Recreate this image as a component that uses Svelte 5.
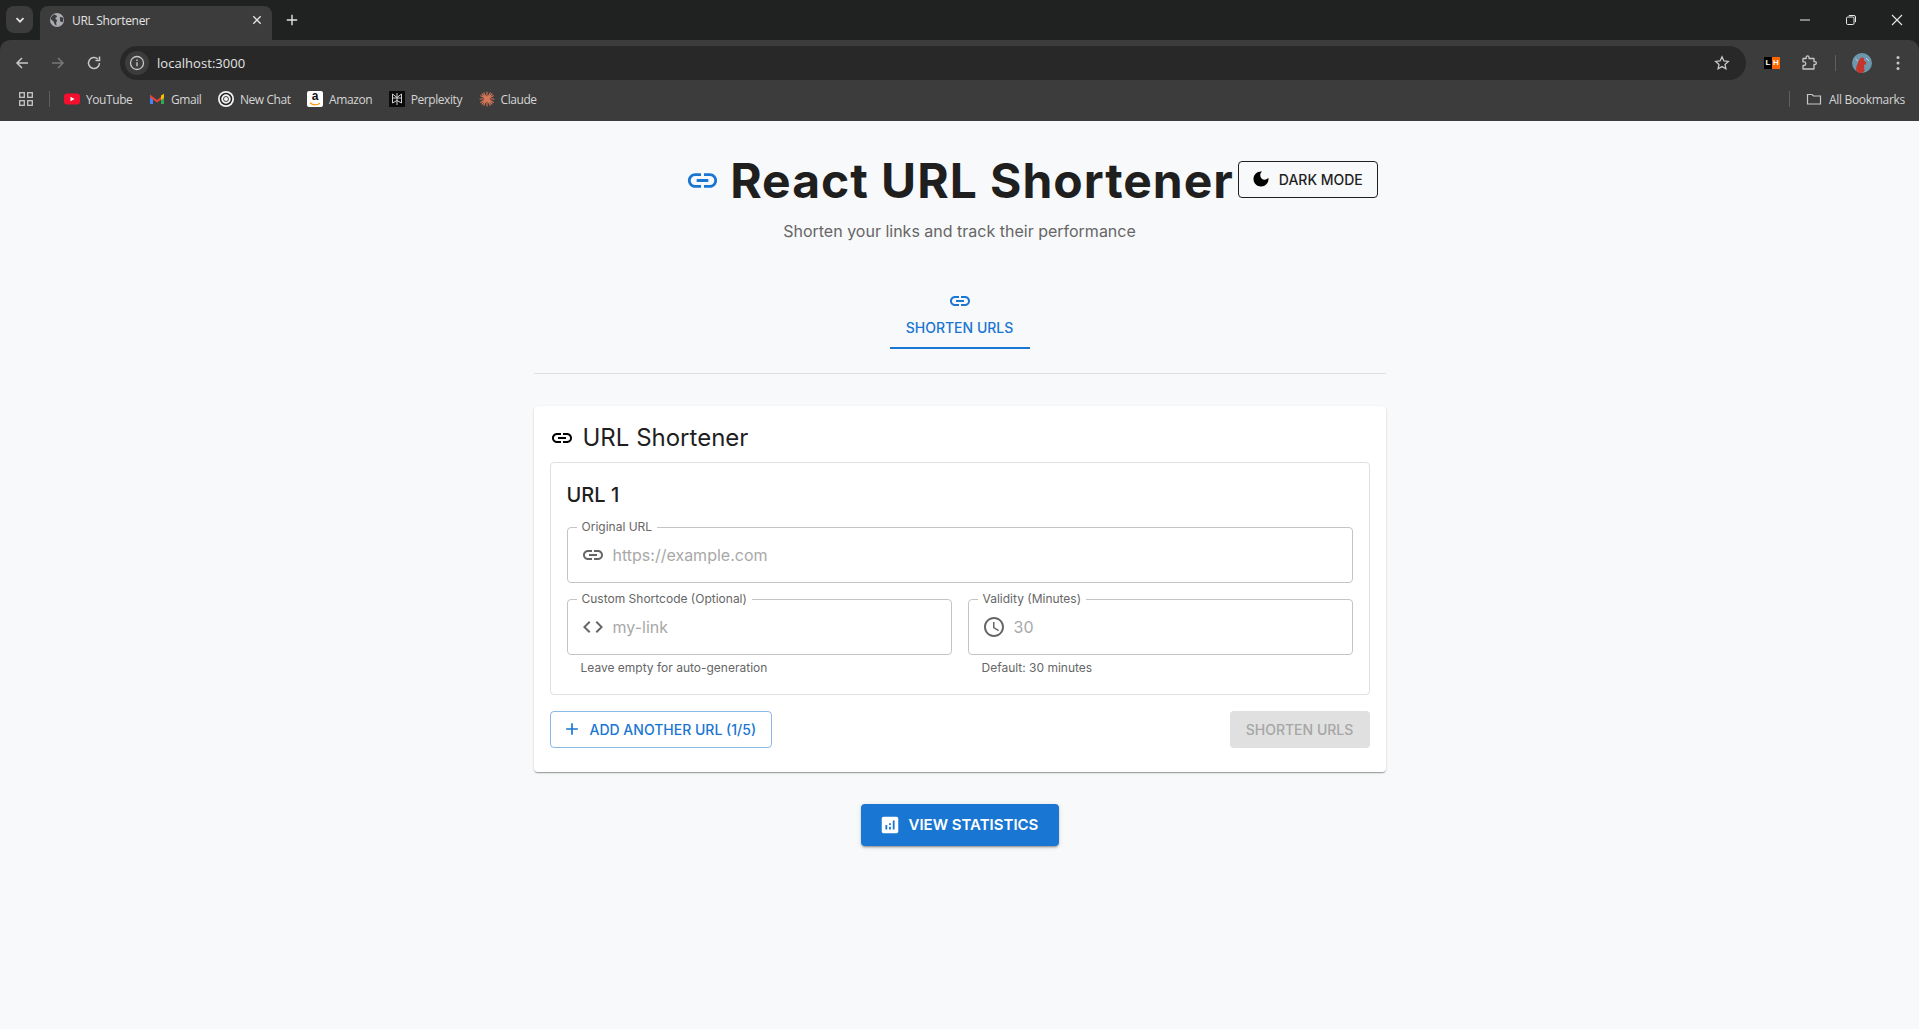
<script>
  const linkPath = 'M3.9 12c0-1.71 1.39-3.1 3.1-3.1h4V7H7c-2.76 0-5 2.24-5 5s2.24 5 5 5h4v-1.9H7c-1.71 0-3.1-1.39-3.1-3.1zM8 13h8v-2H8v2zm9-6h-4v1.9h4c1.71 0 3.1 1.39 3.1 3.1s-1.39 3.1-3.1 3.1h-4V17h4c2.76 0 5-2.24 5-5s-2.24-5-5-5z';
  const moonPath = 'M12 3c-4.97 0-9 4.03-9 9s4.03 9 9 9 9-4.03 9-9c0-.46-.04-.92-.1-1.36-.98 1.37-2.58 2.26-4.4 2.26-2.98 0-5.4-2.42-5.4-5.4 0-1.81.89-3.42 2.26-4.4-.44-.06-.9-.1-1.36-.1z';
  const codePath = 'M9.4 16.6 4.8 12l4.6-4.6L8 6l-6 6 6 6 1.4-1.4zm5.2 0 4.6-4.6-4.6-4.6L16 6l6 6-6 6-1.4-1.4z';
  const clockPath = 'M11.99 2C6.47 2 2 6.48 2 12s4.47 10 9.99 10C17.52 22 22 17.52 22 12S17.52 2 11.99 2zM12 20c-4.42 0-8-3.58-8-8s3.58-8 8-8 8 3.58 8 8-3.58 8-8 8zm.5-13H11v6l5.25 3.15.75-1.23-4.5-2.67z';
  const addPath = 'M19 13h-6v6h-2v-6H5v-2h6V5h2v6h6v2z';
  const statsPath = 'M19 3H5c-1.1 0-2 .9-2 2v14c0 1.1.9 2 2 2h14c1.1 0 2-.9 2-2V5c0-1.1-.9-2-2-2zM9 17H7v-5h2v5zm4 0h-2v-3h2v3zm0-5h-2v-2h2v2zm4 5h-2V7h2v10z';
</script>

<div class="browser">
  <div class="tabstrip">
    <button class="tab-search" aria-label="Search tabs">
      <svg width="12" height="12" viewBox="0 0 12 12"><path d="M2.5 4.2 6 7.7l3.5-3.5" fill="none" stroke="#e3e3e3" stroke-width="1.7"/></svg>
    </button>
    <div class="tab">
      <svg class="favicon" width="16" height="16" viewBox="0 0 16 16"><circle cx="8" cy="8" r="7" fill="#a8abaf"/><path d="M5 2.2c1 1 2.6.8 3 2 .3 1-1.400 1-1.700 2-.2 1 1.500 1 1.700 2 .2 1.100-1 2-.8 3.300.1.900.6 2 .6 2-2-.3-2.500-2-3-3.500-.4-1.300-2.200-1.600-3-3 0-2 1.600-4 4.200-4.800zM11 5c1 0 2.500.2 3 1 .4 1.500.2 3-.5 4.300-.8-.3-2-.4-2.500-1.300-.4-1.100.5-1.500.2-2.300-.2-.6-.5-1.100-.2-1.700z" fill="#3c3c3c"/></svg>
      <span class="tab-title">URL Shortener</span>
      <svg class="tab-close" width="10" height="10" viewBox="0 0 10 10"><path d="M1.300 1.300l7.400 7.400M8.700 1.300 1.300 8.700" stroke="#e3e3e3" stroke-width="1.300"/></svg>
    </div>
    <svg class="new-tab" width="12" height="12" viewBox="0 0 12 12"><path d="M6 .8v10.400M.8 6h10.400" stroke="#e3e3e3" stroke-width="1.400"/></svg>
    <div class="win-controls">
      <svg width="12" height="12" viewBox="0 0 12 12"><path d="M1 6h10" stroke="#e8e8e8" stroke-width="1"/></svg>
      <svg width="12" height="12" viewBox="0 0 12 12"><rect x="1.500" y="3" width="7.500" height="7.500" rx="1.200" fill="none" stroke="#e8e8e8"/><path d="M3.800 1.500h5.200a1.500 1.500 0 0 1 1.500 1.500v5.200" fill="none" stroke="#e8e8e8"/></svg>
      <svg width="12" height="12" viewBox="0 0 12 12"><path d="M1 1l10 10M11 1 1 11" stroke="#e8e8e8" stroke-width="1.100"/></svg>
    </div>
  </div>

  <div class="toolbar">
    <svg class="nav" width="16" height="16" viewBox="0 0 16 16"><path d="M14 8H3M8 3 3 8l5 5" fill="none" stroke="#c7c7c7" stroke-width="1.500"/></svg>
    <svg class="nav" width="16" height="16" viewBox="0 0 16 16"><path d="M2 8h11M8 3l5 5-5 5" fill="none" stroke="#777" stroke-width="1.500"/></svg>
    <svg class="nav" width="16" height="16" viewBox="0 0 16 16"><path d="M13.500 8a5.500 5.500 0 1 1-1.700-4M13.500 1.500V5.500H9.500" fill="none" stroke="#c7c7c7" stroke-width="1.500"/></svg>
    <div class="omnibox">
      <span class="site-info">
        <svg width="16" height="16" viewBox="0 0 16 16"><circle cx="8" cy="8" r="6.500" fill="none" stroke="#c7c7c7" stroke-width="1.300"/><path d="M8 7.200v4M8 4.500v1.400" stroke="#c7c7c7" stroke-width="1.400"/></svg>
      </span>
      <span class="url">localhost:3000</span>
      <svg class="star" width="16" height="16" viewBox="0 0 16 16"><path d="M8 1.800l1.900 4.100 4.400.5-3.300 3 .9 4.400L8 11.600l-3.900 2.200.9-4.400-3.300-3 4.400-.5z" fill="none" stroke="#c7c7c7" stroke-width="1.300"/></svg>
    </div>
    <div class="lh"><span class="lh-l">L</span><span class="lh-h">H</span></div>
    <svg class="ext" width="18" height="18" viewBox="0 0 18 18"><path d="M3 4.500h3.200V3.200a1.400 1.400 0 0 1 2.800 0v1.300h5v3.200h1a1.400 1.400 0 0 1 0 2.800h-1v4.500H3v-3.500h1a1.800 1.800 0 0 0 0-3.600H3z" fill="none" stroke="#c7c7c7" stroke-width="1.300" stroke-linejoin="round"/></svg>
    <span class="tool-sep"></span>
    <svg class="avatar" width="20" height="20" viewBox="0 0 20 20"><circle cx="10" cy="10" r="10" fill="#6d97ad"/><path d="M4 17c0-3 1-5 2-7 .4-2 1.600-5 4-5.500 2-.4 2.500 1.500 2 3l2.500 2-1 2.500-1.500-.5.500 6.500-2.500 2h-3z" fill="#c5352b"/><path d="M14 5l3 3M3.500 6 6 8" stroke="#e6e6e6" stroke-width=".7"/></svg>
    <svg class="dots" width="4" height="16" viewBox="0 0 4 16"><circle cx="2" cy="2.500" r="1.500" fill="#c7c7c7"/><circle cx="2" cy="8" r="1.500" fill="#c7c7c7"/><circle cx="2" cy="13.500" r="1.500" fill="#c7c7c7"/></svg>
  </div>

  <div class="bookmarks">
    <svg class="apps" width="14" height="14" viewBox="0 0 14 14"><g fill="none" stroke="#c7c7c7" stroke-width="1.300"><rect x=".7" y=".7" width="4.600" height="4.600"/><rect x="8.700" y=".7" width="4.600" height="4.600"/><rect x=".7" y="8.700" width="4.600" height="4.600"/><rect x="8.700" y="8.700" width="4.600" height="4.600"/></g></svg>
    <span class="bm-sep"></span>
    <div class="bm">
      <svg width="16" height="16" viewBox="0 0 16 16"><rect y="2.500" width="16" height="11" rx="3" fill="#f40f2e"/><path d="M6.500 5.700v4.600L10.500 8z" fill="#fff"/></svg>
      <span>YouTube</span>
    </div>
    <div class="bm">
      <svg width="16" height="16" viewBox="0 0 16 16"><path d="M1 4.500v8.500h3V7.500z" fill="#4285f4"/><path d="M15 4.500v8.500h-3V7.500z" fill="#34a853"/><path d="M1 3.500 8 9l7-5.500V6.500L8 11.500 1 6.500z" fill="#ea4335"/><path d="M12 4.500l3-1.800V7l-3 2z" fill="#fbbc04"/></svg>
      <span>Gmail</span>
    </div>
    <div class="bm">
      <svg width="16" height="16" viewBox="0 0 16 16"><circle cx="8" cy="8" r="8" fill="#f2f2f2"/><circle cx="8" cy="8" r="5.500" fill="none" stroke="#222" stroke-width="1.500"/><circle cx="8" cy="8" r="2.500" fill="none" stroke="#444" stroke-width="1"/></svg>
      <span>New Chat</span>
    </div>
    <div class="bm">
      <div class="amazon">a<svg width="12" height="4" viewBox="0 0 12 4"><path d="M1 .8c3 2.400 7 2.400 10 .4" fill="none" stroke="#f90" stroke-width="1.300"/></svg></div>
      <span>Amazon</span>
    </div>
    <div class="bm">
      <svg width="16" height="16" viewBox="0 0 16 16"><rect width="16" height="16" fill="#0b0b0b"/><path d="M8 2v12M3.500 3 8 6.500 12.500 3v4h-9zM3.500 7v5L8 9.500l4.500 2.500V7" fill="none" stroke="#cfcfcf" stroke-width="1"/></svg>
      <span>Perplexity</span>
    </div>
    <div class="bm">
      <svg width="16" height="16" viewBox="0 0 16 16"><path d="M8 1v14M1 8h14M3 3l10 10M13 3 3 13M4.800 1.700l6.400 12.600M11.200 1.700 4.800 14.300M1.700 4.800l12.600 6.400M14.300 4.800 1.700 11.200" stroke="#d97757" stroke-width="1.100" stroke-linecap="round"/></svg>
      <span>Claude</span>
    </div>
    <span class="bm-sep right"></span>
    <div class="bm all">
      <svg width="16" height="16" viewBox="0 0 16 16"><path d="M1.500 3.500h4.500l1.500 1.500h7v8h-13z" fill="none" stroke="#c7c7c7" stroke-width="1.200"/></svg>
      <span>All Bookmarks</span>
    </div>
  </div>
</div>

<main class="page">
  <header class="hero">
    <div class="title-row">
      <h1>
        <svg class="title-icon" width="35" height="35" viewBox="0 0 24 24"><path d={linkPath}/></svg>
        <span>React URL Shortener</span>
      </h1>
      <button class="btn-dark">
        <svg width="20" height="20" viewBox="0 0 24 24"><path d={moonPath}/></svg>
        DARK MODE
      </button>
    </div>
    <p class="subtitle">Shorten your links and track their performance</p>
  </header>

  <nav class="tabs">
    <div class="nav-tab">
      <svg width="24" height="24" viewBox="0 0 24 24"><path d={linkPath}/></svg>
      <span>SHORTEN URLS</span>
    </div>
  </nav>

  <section class="card">
    <h2>
      <svg width="24" height="24" viewBox="0 0 24 24"><path d={linkPath}/></svg>
      URL Shortener
    </h2>
    <div class="url-box">
      <h3>URL 1</h3>
      <div class="field">
        <span class="label">Original URL</span>
        <svg width="24" height="24" viewBox="0 0 24 24"><path d={linkPath}/></svg>
        <span class="placeholder">https://example.com</span>
      </div>
      <div class="two-col">
        <div>
          <div class="field">
            <span class="label">Custom Shortcode (Optional)</span>
            <svg width="24" height="24" viewBox="0 0 24 24"><path d={codePath}/></svg>
            <span class="placeholder">my-link</span>
          </div>
          <p class="helper">Leave empty for auto-generation</p>
        </div>
        <div>
          <div class="field">
            <span class="label">Validity (Minutes)</span>
            <svg width="24" height="24" viewBox="0 0 24 24"><path d={clockPath}/></svg>
            <span class="placeholder">30</span>
          </div>
          <p class="helper">Default: 30 minutes</p>
        </div>
      </div>
    </div>
    <div class="actions">
      <button class="btn-add">
        <svg width="20" height="20" viewBox="0 0 24 24"><path d={addPath}/></svg>
        ADD ANOTHER URL (1/5)
      </button>
      <button class="btn-disabled" disabled>SHORTEN URLS</button>
    </div>
  </section>

  <div class="stats-row">
    <button class="btn-stats">
      <svg width="22" height="22" viewBox="0 0 24 24"><path d={statsPath}/></svg>
      VIEW STATISTICS
    </button>
  </div>
</main>

<style>
  :global(body) {
    margin: 0;
    background: #f8f9fa;
    font-family: Inter, sans-serif;
  }

  button {
    font-family: Inter, sans-serif;
    cursor: pointer;
  }

  svg {
    display: block;
    flex-shrink: 0;
  }

  /* browser chrome */
  .browser {
    height: 121px;
    background: #202222;
    font-family: 'Open Sans', sans-serif;
    color: #e3e3e3;
    display: flex;
    flex-direction: column;
  }

  .tabstrip {
    height: 40px;
    display: flex;
    align-items: flex-start;
    flex-shrink: 0;
  }

  .tab-search {
    width: 27px;
    height: 27px;
    margin: 6px 0 0 6px;
    padding: 0;
    border: none;
    border-radius: 8px;
    background: #3c3c3c;
    display: flex;
    align-items: center;
    justify-content: center;
  }

  .tab {
    width: 232px;
    height: 34px;
    margin: 6px 0 0 7px;
    box-sizing: border-box;
    padding: 0 10px 6px 9px;
    background: #3c3c3c;
    border-radius: 8px 8px 0 0;
    display: flex;
    align-items: center;
  }

  .tab-title {
    flex: 1;
    margin-left: 7px;
    font-size: 12px;
    color: #e3e3e3;
    letter-spacing: -0.3px;
  }

  .new-tab {
    margin: 14px 0 0 14px;
  }

  .win-controls {
    margin-left: auto;
    width: 104px;
    padding: 14px 16px 0 0;
    display: flex;
    justify-content: space-between;
  }

  .toolbar {
    height: 40px;
    background: #3c3c3c;
    border-radius: 10px 10px 0 0;
    display: flex;
    align-items: flex-start;
    padding: 6px 15px 0 14px;
    box-sizing: border-box;
    flex-shrink: 0;
  }

  .nav {
    margin: 9px 20px 0 0;
  }

  .nav:nth-child(3) {
    margin-right: 18px;
  }

  .omnibox {
    width: 1626px;
    height: 34px;
    margin-right: 18px;
    background: #282828;
    border-radius: 17px;
    display: flex;
    align-items: center;
    padding: 0 16px 0 5px;
    box-sizing: border-box;
  }

  .site-info {
    width: 24px;
    height: 24px;
    border-radius: 50%;
    background: #3c3c3c;
    display: flex;
    align-items: center;
    justify-content: center;
  }

  .url {
    flex: 1;
    margin-left: 8px;
    font-size: 13px;
    letter-spacing: 0.05px;
    color: #e3e3e3;
  }

  .lh {
    width: 16px;
    height: 12px;
    margin-top: 11px;
    display: flex;
    font-family: 'Liberation Sans', sans-serif;
    font-size: 8px;
    font-weight: 700;
    line-height: 12px;
    text-align: center;
  }

  .lh-l {
    flex: 1;
    background: #000;
    color: #fff;
  }

  .lh-h {
    flex: 1;
    background: #f60;
    color: #fff;
  }

  .ext {
    margin: 8px 0 0 20px;
  }

  .tool-sep {
    width: 1px;
    height: 16px;
    margin: 9px 0 0 17px;
    background: #5f5f5f;
  }

  .avatar {
    margin: 7px 0 0 16px;
  }

  .dots {
    margin: 9px 0 0 24px;
  }

  .bookmarks {
    height: 41px;
    background: #3c3c3c;
    display: flex;
    align-items: center;
    padding: 0 14px 3px 19px;
    box-sizing: border-box;
    flex-shrink: 0;
  }

  .bm-sep {
    width: 1px;
    height: 16px;
    margin: 0 14px 0 16px;
    background: #5f5f5f;
  }

  .bm-sep.right {
    margin: 0 16px 0 auto;
  }

  .bm {
    display: flex;
    align-items: center;
    gap: 6px;
    margin-right: 16.500px;
    font-size: 12px;
    letter-spacing: -0.42px;
    color: #d5d5d5;
  }

  .bm.all {
    margin-right: 0;
    gap: 7px;
    letter-spacing: -0.3px;
  }

  .amazon {
    width: 16px;
    height: 16px;
    border-radius: 2px;
    background: #fff;
    color: #111;
    font-family: 'Liberation Sans', sans-serif;
    font-size: 12px;
    font-weight: 700;
    line-height: 11px;
    text-align: center;
    letter-spacing: 0;
    display: flex;
    flex-direction: column;
    align-items: center;
  }

  /* page */
  .page {
    width: 852px;
    margin: 0 auto;
    min-height: 908px;
    padding-top: 31px;
    box-sizing: border-box;
    color: #1f1f1f;
  }

  .title-row {
    display: grid;
    grid-template-columns: 1fr auto 1fr;
    align-items: center;
    column-gap: 4px;
  }

  h1 {
    grid-column: 2;
    margin: 0;
    display: flex;
    align-items: center;
    gap: 10px;
    font-size: 48px;
    font-weight: 700;
    line-height: 1.2;
    letter-spacing: 0.97px;
    color: #1f1f1f;
    white-space: nowrap;
  }

  .title-icon {
    fill: #1976d2;
  }

  .btn-dark {
    grid-column: 3;
    justify-self: start;
    width: 140px;
    height: 37px;
    margin-top: -3px;
    display: flex;
    align-items: center;
    justify-content: center;
    gap: 8px;
    padding: 0 2px 0 0;
    background: transparent;
    border: 1px solid #1f1f1f;
    border-radius: 4px;
    color: #1f1f1f;
    font-size: 14px;
    font-weight: 500;
    white-space: nowrap;
  }

  .subtitle {
    margin: 9px 0 0;
    text-align: center;
    font-size: 16px;
    line-height: 1.5;
    color: #666;
  }

  .tabs {
    margin-top: 15px;
    padding-top: 20px;
    padding-bottom: 24px;
    border-bottom: 1px solid #e0e0e0;
    display: flex;
    justify-content: center;
  }

  .nav-tab {
    width: 140px;
    height: 71px;
    box-sizing: border-box;
    border-bottom: 2px solid #1976d2;
    display: flex;
    flex-direction: column;
    align-items: center;
    justify-content: center;
    gap: 6px;
    color: #1976d2;
    font-size: 14px;
    font-weight: 500;
    fill: #1976d2;
  }

  .card {
    margin-top: 32px;
    padding: 16px;
    height: 366px;
    box-sizing: border-box;
    background: #fff;
    border-radius: 4px;
    box-shadow: 0 2px 1px -1px rgba(0, 0, 0, 0.2), 0 1px 1px 0 rgba(0, 0, 0, 0.14), 0 1px 3px 0 rgba(0, 0, 0, 0.12);
  }

  h2 {
    margin: 0 0 8px;
    display: flex;
    align-items: center;
    gap: 9px;
    font-size: 24px;
    font-weight: 400;
    line-height: 32px;
    color: #1f1f1f;
  }

  .url-box {
    height: 233px;
    box-sizing: border-box;
    padding: 16px;
    border: 1px solid #e0e0e0;
    border-radius: 4px;
  }

  h3 {
    margin: 0 0 16px;
    font-size: 20px;
    font-weight: 500;
    line-height: 32px;
  }

  .field {
    position: relative;
    height: 56px;
    box-sizing: border-box;
    border: 1px solid #c4c4c4;
    border-radius: 4px;
    display: flex;
    align-items: center;
    gap: 8px;
    padding-left: 13px;
    fill: rgba(0, 0, 0, 0.6);
  }

  .label {
    position: absolute;
    top: -8px;
    left: 9px;
    padding: 0 5px;
    background: #fff;
    font-size: 12px;
    line-height: 14px;
    color: #666;
  }

  .placeholder {
    font-size: 16px;
    color: #a8a8a8;
  }

  .two-col {
    margin-top: 16px;
    display: grid;
    grid-template-columns: 1fr 1fr;
    gap: 16px;
  }

  .helper {
    margin: 3px 14px 0;
    font-size: 12px;
    line-height: 20px;
    color: #666;
  }

  .actions {
    margin-top: 16px;
    display: flex;
    justify-content: space-between;
    align-items: center;
  }

  .btn-add {
    height: 37px;
    padding: 0 15px 0 11px;
    display: flex;
    align-items: center;
    gap: 8px;
    background: transparent;
    border: 1px solid rgba(25, 118, 210, 0.5);
    border-radius: 4px;
    color: #1976d2;
    fill: #1976d2;
    font-size: 14px;
    font-weight: 500;
  }

  .btn-disabled {
    width: 140px;
    height: 37px;
    padding: 0;
    background: #e0e0e0;
    border: none;
    border-radius: 4px;
    color: #a6a6a6;
    font-size: 14px;
    font-weight: 500;
  }

  .stats-row {
    margin-top: 32px;
    display: flex;
    justify-content: center;
  }

  .btn-stats {
    width: 198px;
    height: 42px;
    padding: 0 21px 0 18px;
    display: flex;
    align-items: center;
    gap: 8px;
    background: #1976d2;
    border: none;
    border-radius: 4px;
    color: #fff;
    fill: #fff;
    font-size: 15px;
    font-weight: 600;
    white-space: nowrap;
    box-shadow: 0 3px 1px -2px rgba(0, 0, 0, 0.2), 0 2px 2px 0 rgba(0, 0, 0, 0.14), 0 1px 5px 0 rgba(0, 0, 0, 0.12);
  }
</style>
